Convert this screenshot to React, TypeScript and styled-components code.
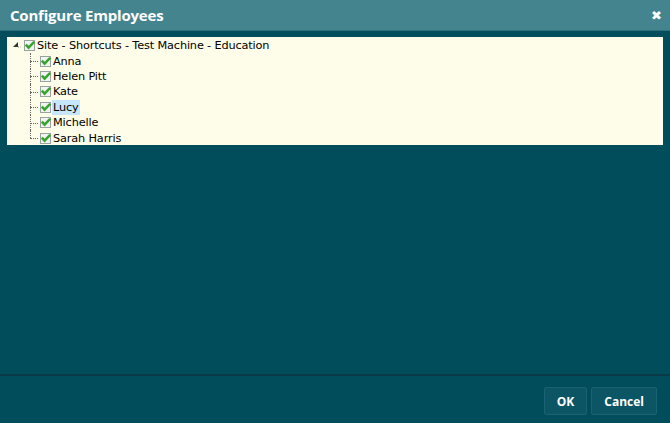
import React from "react";
import styled, { createGlobalStyle } from "styled-components";

const Global = createGlobalStyle`
  html, body { margin: 0; padding: 0; }
  body { background: #024d5c; font-family: "DejaVu Sans", Verdana, sans-serif; }
  #root { height: 423px; }
`;

const Dialog = styled.div`
  width: 670px;
  height: 423px;
  display: flex;
  flex-direction: column;
  background: #024d5c;
  overflow: hidden;
`;

const Header = styled.div`
  height: 30px;
  flex: none;
  display: flex;
  align-items: center;
  justify-content: space-between;
  padding: 0 8px 0 10px;
  background: #44848f;
  color: #fff;
  border-bottom: 1px solid #2f6f7b;
`;

const Title = styled.div`
  font-family: "Open Sans", sans-serif;
  font-weight: 700;
  font-size: 15px;
  letter-spacing: -0.2px;
`;

const Close = styled.div`
  font-family: "DejaVu Sans", sans-serif;
  font-weight: 700;
  font-size: 13px;
`;

const Body = styled.div`
  flex: 1;
  padding: 6px 7px 0 7px;
`;

const TreePanel = styled.div`
  background: #fdfde9;
  height: 108px;
  padding: 1px 0 0 4px;
  box-sizing: border-box;
`;

const Row = styled.div`
  height: 15.4px;
  display: flex;
  align-items: center;
`;

const Indent = styled.div`
  width: 13px;
  flex: none;
`;

const Connector = styled.div<{ $last: boolean }>`
  width: 16px;
  height: 100%;
  position: relative;
  flex: none;
  &::before {
    content: "";
    position: absolute;
    left: 6px;
    top: 0;
    height: ${(p) => (p.$last ? "50%" : "100%")};
    border-left: 1px dotted #666;
  }
  &::after {
    content: "";
    position: absolute;
    left: 6px;
    top: 50%;
    width: 8px;
    border-top: 1px dotted #666;
  }
`;

const Expander = styled.div`
  width: 13px;
  height: 100%;
  position: relative;
  flex: none;
`;

const Box = styled.div`
  width: 11px;
  height: 11px;
  border: 1px solid #9aa3a0;
  background: #f3f3f3;
  box-sizing: border-box;
  position: relative;
  flex: none;
`;

const Label = styled.span<{ $selected?: boolean }>`
  font-family: "DejaVu Sans", Verdana, sans-serif;
  font-size: 11.3px;
  letter-spacing: -0.15px;
  color: #000;
  padding: 0 1px;
  line-height: 15px;
  margin-left: 1px;
  background: ${(p) => (p.$selected ? "#c5e6fb" : "transparent")};
`;

const Footer = styled.div`
  flex: none;
  height: 47px;
  border-top: 2px solid #083a48;
  display: flex;
  justify-content: flex-end;
  align-items: center;
  gap: 4px;
  padding-right: 13px;
`;

const Button = styled.button`
  font-family: "Open Sans", sans-serif;
  font-weight: 700;
  font-size: 12px;
  color: #fff;
  background: #0b5564;
  border: 1px solid #1a6272;
  border-radius: 2px;
  height: 28px;
  padding: 0 12px;
  margin-top: 3px;
`;

const Check = () => (
  <svg width="11" height="11" viewBox="0 0 11 11" style={{ position: "absolute", left: -1, top: -1 }}>
    <path d="M1.8 4.6 L4.6 7.6 L10.2 1.8" fill="none" stroke="#36a52c" strokeWidth="2.6" strokeLinejoin="miter" />
  </svg>
);

const ExpandIcon = () => (
  <svg width="10" height="10" viewBox="0 0 10 10" style={{ position: "absolute", left: 0, top: 2 }}>
    <path d="M2 7 L7 7 L7 2 Z" fill="#333" />
    <path d="M7 7 L9.5 7" stroke="#777" strokeWidth="1" strokeDasharray="1 1" />
  </svg>
);

const children = ["Anna", "Helen Pitt", "Kate", "Lucy", "Michelle", "Sarah Harris"];

export default function App() {
  return (
    <Dialog>
      <Global />
      <Header>
        <Title>Configure Employees</Title>
        <Close>✖</Close>
      </Header>
      <Body>
        <TreePanel>
          <Row>
            <Expander>
              <ExpandIcon />
            </Expander>
            <Box>
              <Check />
            </Box>
            <Label>Site - Shortcuts - Test Machine - Education</Label>
          </Row>
          {children.map((c, i) => (
            <Row key={c}>
              <Indent />
              <Connector $last={i === children.length - 1} />
              <Box>
                <Check />
              </Box>
              <Label $selected={c === "Lucy"}>{c}</Label>
            </Row>
          ))}
        </TreePanel>
      </Body>
      <Footer>
        <Button>OK</Button>
        <Button>Cancel</Button>
      </Footer>
    </Dialog>
  );
}
